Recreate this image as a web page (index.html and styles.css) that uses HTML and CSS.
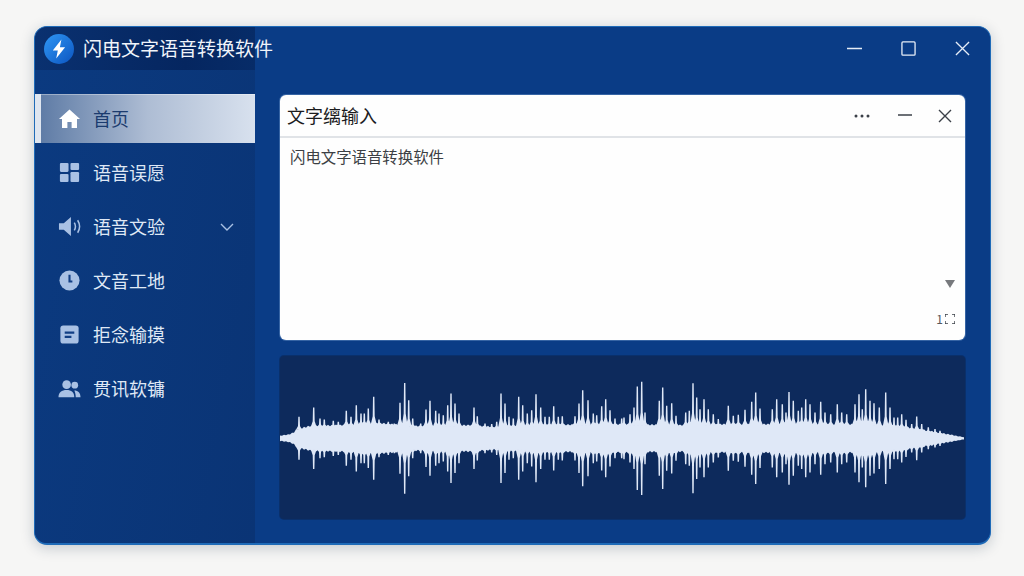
FILE: index.html
```html
<!DOCTYPE html>
<html lang="zh-CN">
<head>
    <meta charset="UTF-8" />
    <title>闪电文字语音转换软件</title>
    <link rel="stylesheet" href="styles.css">
</head>
<body>
    <div class="window">
        <header class="titlebar">
            <div class="brand">
                <svg class="brand-logo" viewBox="0 0 30 30">
                    <defs>
                        <linearGradient id="logoFill" x1="0" y1="0" x2="1" y2="1">
                            <stop offset="0" stop-color="#2f97f5"/>
                            <stop offset="1" stop-color="#0c55c0"/>
                        </linearGradient>
                    </defs>
                    <circle cx="15" cy="15" r="15" fill="url(#logoFill)"/>
                    <path d="M17.4 5.6 8.800 16.600h5l-1.600 8 8.900-11.400h-5.200z" fill="#fff"/>
                </svg>
                <span class="brand-name">闪电文字语音转换软件</span>
            </div>
            <div class="win-controls">
                <svg class="win-icon" viewBox="0 0 16 16"><path d="M0 8h16"/></svg>
                <svg class="win-icon" viewBox="0 0 16 16"><rect x="1" y="1" width="14" height="14" rx="1"/></svg>
                <svg class="win-icon" viewBox="0 0 16 16"><path d="M1 1l14 14M15 1 1 15"/></svg>
            </div>
        </header>

        <div class="content">
            <nav class="sidebar">
                <a class="nav-item active">
                    <svg class="nav-icon" viewBox="0 0 24 24"><path d="M12 2.500 1 12.600h3.200V22h5.600v-6.400h4.400V22h5.600v-9.400H23z" fill="#fff"/></svg>
                    <span>首页</span>
                </a>
                <a class="nav-item">
                    <svg class="nav-icon" viewBox="0 0 24 24"><rect x="2" y="2" width="9" height="9.500" rx="1.200"/><rect x="13" y="2" width="9" height="7.500" rx="1.200"/><rect x="2" y="13.500" width="9" height="8.500" rx="1.200"/><rect x="13" y="11.500" width="9" height="10.500" rx="1.200"/></svg>
                    <span>语音误愿</span>
                </a>
                <a class="nav-item">
                    <svg class="nav-icon" viewBox="0 0 24 24"><path d="M1 8.500h5L13.500 2v20L6 15.500H1z"/><path class="wave-line" d="M17 8c1.500 2.500 1.500 5.500 0 8M20.500 5.500c2.500 4 2.500 9 0 13"/></svg>
                    <span>语音文验</span>
                    <svg class="nav-chevron" viewBox="0 0 14 8"><path d="M1 1l6 6 6-6"/></svg>
                </a>
                <a class="nav-item">
                    <svg class="nav-icon" viewBox="0 0 24 24"><circle cx="12" cy="12" r="10.500"/><path class="clock-hand" d="M12 6v7h3"/></svg>
                    <span>文音工地</span>
                </a>
                <a class="nav-item">
                    <svg class="nav-icon" viewBox="0 0 24 24"><rect x="2.500" y="2.500" width="19" height="19" rx="3"/><path class="clock-hand" d="M7 10h10M7 14.500h7"/></svg>
                    <span>拒念输摸</span>
                </a>
                <a class="nav-item">
                    <svg class="nav-icon" viewBox="0 0 24 24"><circle cx="9" cy="8" r="4.500"/><circle cx="17.500" cy="8.500" r="3.500"/><path d="M0.500 21c0-5 3.500-7.500 8.500-7.500s8 2.500 8 7.500z"/><path d="M18.500 21h5c0-4.500-2.500-7-6.500-7 1 2 1.500 4.500 1.500 7z"/></svg>
                    <span>贯讯软镛</span>
                </a>
            </nav>

            <main class="main">
                <section class="editor">
                    <div class="editor-head">
                        <h2 class="editor-title">文字缡输入</h2>
                        <div class="editor-tools">
                            <svg class="tool-dots" viewBox="0 0 16 4"><circle cx="2" cy="2" r="1.500"/><circle cx="8" cy="2" r="1.500"/><circle cx="14" cy="2" r="1.500"/></svg>
                            <svg class="tool-icon" viewBox="0 0 14 14"><path d="M0 6h14"/></svg>
                            <svg class="tool-icon" viewBox="0 0 14 14"><path d="M1 1l12 12M13 1 1 13"/></svg>
                        </div>
                    </div>
                    <div class="editor-body">
                        <p class="editor-text">闪电文字语音转换软件</p>
                        <div class="editor-foot">
                            <svg class="scroll-arrow" viewBox="0 0 10 8"><path d="M0 0h10L5 8z"/></svg>
                            <div class="zoom-info">
                                <span>1</span>
                                <svg class="zoom-frame" viewBox="0 0 10 10"><path d="M0 3V0h3M7 0h3v3M10 7v3H7M3 10H0V7"/></svg>
                            </div>
                        </div>
                    </div>
                </section>

                <section class="wave-panel">
                    <svg id="waveform" class="waveform" viewBox="0 0 685 164" preserveAspectRatio="none"></svg>
                </section>
            </main>
        </div>
    </div>

    <script src="script.js"></script>
</body>
</html>
```

FILE: styles.css
```css
* {
    box-sizing: border-box;
    margin: 0;
    padding: 0;
}

body {
    font-family: "Noto Sans CJK SC", "Noto Sans", sans-serif;
    background-color: #f6f6f5;
    width: 1024px;
    height: 576px;
    padding: 26px 33px 31px 34px;
    overflow: hidden;
}

.window {
    height: 100%;
    display: flex;
    flex-direction: column;
    background-color: #0a3c86;
    border: 1px solid #1f6bb8;
    border-bottom-width: 2px;
    border-radius: 13px;
    box-shadow: 0 3px 14px rgba(20, 40, 70, 0.22);
    overflow: hidden;
}

.titlebar {
    height: 43px;
    flex-shrink: 0;
    display: flex;
    align-items: center;
    justify-content: space-between;
    padding: 0 20px 0 9px;
    background: linear-gradient(90deg, #0a3170 0, #052660 150px, #072c68 220px, #0a3c86 220px);
}

.brand {
    display: flex;
    align-items: center;
    gap: 9px;
}

.brand-logo {
    width: 30px;
    height: 30px;
}

.brand-name {
    font-size: 19px;
    color: #f0f4fa;
    white-space: nowrap;
    padding-bottom: 2px;
}

.win-controls {
    display: flex;
    align-items: center;
    gap: 39px;
}

.win-icon {
    width: 15px;
    height: 15px;
    fill: none;
    stroke: #e6edf7;
    stroke-width: 1.400;
}

.content {
    flex: 1;
    display: flex;
    min-height: 0;
}

.sidebar {
    width: 220px;
    flex-shrink: 0;
    padding-top: 24px;
    display: flex;
    flex-direction: column;
    gap: 5px;
    background: linear-gradient(100deg, #0b3a80 0, #0a3475 100%);
}

.nav-item {
    height: 49px;
    display: flex;
    align-items: center;
    gap: 12px;
    padding-left: 23px;
    padding-right: 21px;
    font-size: 18px;
    color: #dfe8f5;
}

.nav-item span {
    flex: 1;
    padding-bottom: 2px;
}

.nav-item.active {
    color: #1b3b6e;
    padding-left: 17px;
    border-left: 6px solid #dfe6f0;
    background: linear-gradient(90deg, #5f7ca6 0, #aebdd4 50%, #d8e1ee 100%);
    box-shadow: inset 0 1px 0 rgba(255, 255, 255, 0.35);
}

.nav-icon {
    width: 23px;
    height: 23px;
    fill: #a9c1e4;
    flex-shrink: 0;
}

.wave-line {
    fill: none;
    stroke: #a9c1e4;
    stroke-width: 1.600;
}

.clock-hand {
    fill: none;
    stroke: #123f84;
    stroke-width: 2.200;
}

.nav-chevron {
    width: 14px;
    height: 8px;
    fill: none;
    stroke: #a9c1e4;
    stroke-width: 1.400;
}

.main {
    flex: 1;
    display: flex;
    flex-direction: column;
    gap: 16px;
    padding: 25px 25px 24px 25px;
    min-width: 0;
}

.editor {
    height: 245px;
    flex-shrink: 0;
    display: flex;
    flex-direction: column;
    background-color: #fefefe;
    border-radius: 6px;
    box-shadow: 0 0 0 1px rgba(120, 160, 210, 0.4);
    overflow: hidden;
}

.editor-head {
    height: 43px;
    flex-shrink: 0;
    display: flex;
    align-items: center;
    justify-content: space-between;
    padding: 0 13px 0 7px;
    border-bottom: 2px solid #e0e3e7;
}

.editor-title {
    font-size: 18px;
    font-weight: 400;
    color: #1c1c1e;
    padding-bottom: 2px;
}

.editor-tools {
    display: flex;
    align-items: center;
    gap: 26px;
}

.tool-dots {
    width: 16px;
    height: 4px;
    margin-right: 2px;
    fill: #3b4048;
}

.tool-icon {
    width: 14px;
    height: 14px;
    fill: none;
    stroke: #3b4048;
    stroke-width: 1.400;
}

.editor-body {
    flex: 1;
    display: flex;
    flex-direction: column;
    justify-content: space-between;
    padding: 6px 10px 14px 10px;
}

.editor-text {
    font-size: 15.400px;
    line-height: 24px;
    color: #3c3f44;
}

.editor-foot {
    display: flex;
    flex-direction: column;
    align-items: flex-end;
    gap: 24px;
}

.scroll-arrow {
    width: 10px;
    height: 8px;
    fill: #77797d;
}

.zoom-info {
    display: flex;
    align-items: center;
    gap: 2px;
    font-size: 12px;
    line-height: 14px;
    color: #55585c;
}

.zoom-frame {
    width: 10px;
    height: 10px;
    fill: none;
    stroke: #3b4048;
    stroke-width: 1.400;
}

.wave-panel {
    flex: 1;
    min-height: 0;
    background-color: #0d2a5c;
    border-radius: 4px;
    box-shadow: 0 0 0 1px rgba(10, 40, 90, 0.6);
}

.waveform {
    display: block;
    width: 100%;
    height: 100%;
}
```

FILE: script.js
```js
// peaks as [x, y] read off the picture at 3x, first half and second half
const peaksLeft = [
    [72,200],[116,172],[135,205],[148,208],[175,212],[190,215],[214,182],[228,200],[244,165],[258,190],
    [268,190],[280,175],[296,140],[312,208],[340,215],[358,220],[375,158],[389,98],[401,150],[413,205],
    [437,220],[453,178],[465,152],[482,182],[492,190],[505,195],[518,165],[528,130],[540,160],[552,190],
    [575,230],[597,172],[607,198],[630,220],[650,222],[665,215],[678,130],[690,160],[702,200],[715,205],
    [731,140],[743,165],[757,190],[770,180],[783,132],[797,172],[810,200],[823,200],[836,168],[850,200],
    [862,198],[880,225],[900,198],[912,160],[923,120],[939,150],[955,190],[965,195],[980,168],[992,147],
    [1005,180],[1020,205],[1040,205]
];
const peaksRight = [
    [12,205],[30,195],[42,175],[52,112],[65,97],[75,190],[95,240],[118,155],[128,115],[140,170],
    [155,162],[168,200],[182,235],[197,190],[208,185],[219,102],[230,145],[240,180],[252,150],[265,180],
    [280,195],[295,210],[310,235],[325,170],[340,200],[355,197],[375,182],[395,158],[407,130],[420,178],
    [440,230],[457,180],[470,150],[487,165],[498,190],[507,128],[520,155],[535,185],[545,175],[557,150],
    [570,165],[585,190],[602,158],[615,190],[632,195],[652,165],[665,190],[680,195],[695,230],[705,165],
    [717,135],[727,180],[737,120],[750,155],[762,162],[778,175],[797,130],[810,175],[822,205],[833,205],
    [845,195],[858,212],[875,225],[890,202],[905,225],[925,235],[945,240],[960,245]
];

const midY = 82.8;

const peaks = [
    ...peaksLeft.map(([x, y]) => [x / 3 - 5, (265 - y) / 3]),
    ...peaksRight.map(([x, y]) => [x / 3 + 340, (268 - y) / 3])
];

// thickness of the solid middle part along the panel
const bodyStops = [
    [0,2.5],[8,3.5],[13,5],[17,9],[30,12],[60,13],[100,15],[135,12],[190,13],[215,11],[260,13],[330,14],
    [400,13],[450,14],[520,14],[590,14],[625,11],[650,7],[670,3.5],[685,0.8]
];

function bodyAt(x) {
    for (let i = 1; i < bodyStops.length; i++) {
        const [x0, h0] = bodyStops[i - 1];
        const [x1, h1] = bodyStops[i];
        if (x <= x1) {
            return h0 + (h1 - h0) * (x - x0) / (x1 - x0);
        }
    }
    return 0.8;
}

function fmt(n) {
    return n.toFixed(1);
}

let upper = "";
let lower = "";
for (let x = 0; x <= 685; x += 2) {
    const jag = x % 4 === 0 ? 1 : -0.5;
    const h = Math.max(bodyAt(x) + jag * Math.min(1, bodyAt(x) / 6), 0.5);
    upper += `${x},${fmt(midY - h)} `;
    lower = `${x},${fmt(midY + h)} ` + lower;
}

// each spike: a line with a wider foot where it meets the body
let spikes = "";
for (const [x, h] of peaks) {
    const base = bodyAt(x) - 1;
    if (h <= base) continue;
    const neck = base + (h - base) * 0.3;
    const side = (dir) => [
        `${fmt(x - 3)} ${fmt(midY + dir * base)}`,
        `${fmt(x - 1)} ${fmt(midY + dir * neck)}`,
        `${fmt(x - 0.7)} ${fmt(midY + dir * h)}`,
        `${fmt(x + 0.7)} ${fmt(midY + dir * h)}`,
        `${fmt(x + 1)} ${fmt(midY + dir * neck)}`,
        `${fmt(x + 3)} ${fmt(midY + dir * base)}`
    ];
    spikes += "M" + side(-1).join("L") + "Z";
    spikes += "M" + side(1).join("L") + "Z";
}

document.getElementById("waveform").innerHTML =
    `<polygon points="${upper}${lower}" fill="#dfe8f7"/><path d="${spikes}" fill="#dfe8f7"/>`;
```
